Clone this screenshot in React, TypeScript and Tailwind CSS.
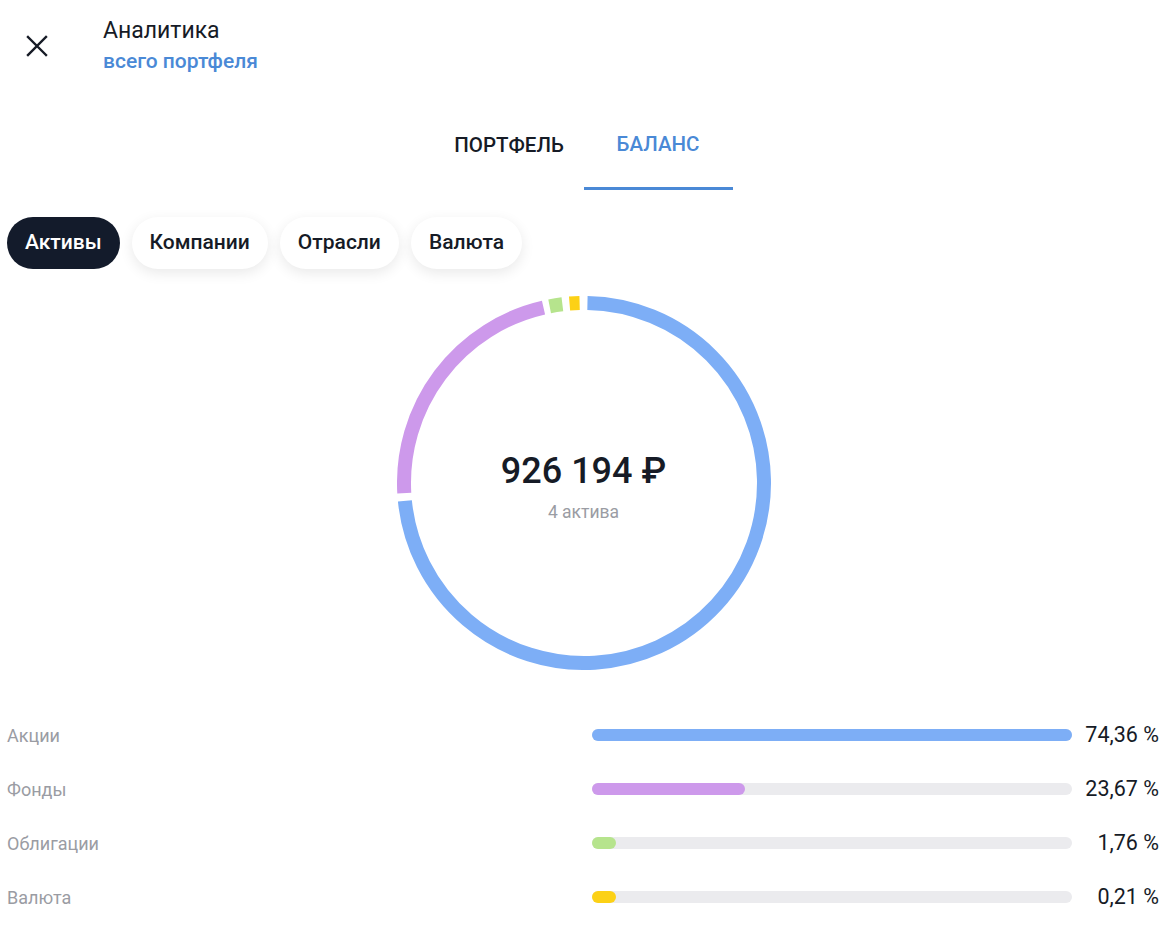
import React from 'react';

const CX = 187;
const CY = 187;
const R = 180;

function arc(from: number, to: number) {
  const toXY = (deg: number) => {
    const rad = (deg * Math.PI) / 180;
    return [CX + R * Math.sin(rad), CY - R * Math.cos(rad)];
  };
  const [x1, y1] = toXY(from);
  const [x2, y2] = toXY(to);
  const large = to - from > 180 ? 1 : 0;
  return `M ${x1.toFixed(2)} ${y1.toFixed(2)} A ${R} ${R} 0 ${large} 1 ${x2.toFixed(2)} ${y2.toFixed(2)}`;
}

const segments = [
  { from: 1.1, to: 264.3, color: '#7daef6' },
  { from: 266.8, to: 347, color: '#cd99eb' },
  { from: 349, to: 353.1, color: '#b6e48d' },
  { from: 355.4, to: 358.6, color: '#fcd116' },
];

const rows = [
  { label: 'Акции', value: '74,36 %', width: 100, color: 'bg-[#7daef6]' },
  { label: 'Фонды', value: '23,67 %', width: 31.8, color: 'bg-[#cd99eb]' },
  { label: 'Облигации', value: '1,76 %', width: 5, color: 'bg-[#b6e48d]' },
  { label: 'Валюта', value: '0,21 %', width: 5, color: 'bg-[#fcd116]' },
];

const chips = ['Активы', 'Компании', 'Отрасли', 'Валюта'];

function App() {
  return (
    <div className="w-[1167px] min-h-[941px] bg-white text-[#161b26] font-['Roboto',sans-serif]">
      {/* header */}
      <div className="flex items-start pt-[17px]">
        <button className="w-[74px] flex justify-center pt-[18px] text-[#161b26]">
          <svg width="22" height="22" viewBox="0 0 22 22" fill="none" stroke="currentColor" strokeWidth="2.4" strokeLinecap="square">
            <path d="M2 2 L20 20 M20 2 L2 20" />
          </svg>
        </button>
        <div className="ml-[29px] flex flex-col">
          <span className="text-[23px] leading-[28px]">Аналитика</span>
          <span className="text-[21px] leading-[26px] font-medium text-[#4a89d6] mt-[3px]">всего портфеля</span>
        </div>
      </div>

      {/* tabs */}
      <div className="flex justify-center mt-[27px]">
        <div className="w-[149px] h-[89px] flex items-center justify-center text-[20.5px] font-medium">ПОРТФЕЛЬ</div>
        <div className="w-[149px] h-[89px] flex items-center justify-center text-[20.5px] font-medium text-[#4a89d6] border-b-[3px] border-[#4a89d6]">
          БАЛАНС
        </div>
      </div>

      {/* chips */}
      <div className="flex gap-3 px-[7px] mt-[27px]">
        {chips.map((c, i) => (
          <div
            key={c}
            className={
              'h-[52px] px-[18px] rounded-full flex items-center text-[21px] font-medium ' +
              (i === 0
                ? 'bg-[#131b2b] text-white'
                : 'bg-white text-[#161b26] shadow-[0_4px_14px_rgba(0,0,0,0.09)]')
            }
          >
            {c}
          </div>
        ))}
      </div>

      {/* donut */}
      <div className="flex justify-center mt-[27px]">
        <div className="relative w-[374px] h-[374px]">
          <svg width="374" height="374" viewBox="0 0 374 374">
            {segments.map((s, i) => (
              <path key={i} d={arc(s.from, s.to)} stroke={s.color} strokeWidth="14" fill="none" />
            ))}
          </svg>
          <div className="absolute inset-0 flex flex-col items-center justify-center pt-[6px]">
            <span className="text-[36px] leading-[44px] font-medium">926 194 ₽</span>
            <span className="text-[17.5px] leading-[22px] text-[#9a9ca3] mt-[8px]">4 актива</span>
          </div>
        </div>
      </div>

      {/* rows */}
      <div className="flex flex-col mt-[38px] pl-[7px] pr-[8px]">
        {rows.map((r) => (
          <div key={r.label} className="h-[54px] flex items-center">
            <span className="w-[585px] text-[18px] text-[#9a9ca3]">{r.label}</span>
            <div className="w-[480px] h-[12px] rounded-full bg-[#ebebee]">
              <div className={'h-full rounded-full ' + r.color} style={{ width: `${r.width}%` }} />
            </div>
            <span className="flex-1 text-right text-[21.5px]">{r.value}</span>
          </div>
        ))}
      </div>
    </div>
  );
}

export default App;
